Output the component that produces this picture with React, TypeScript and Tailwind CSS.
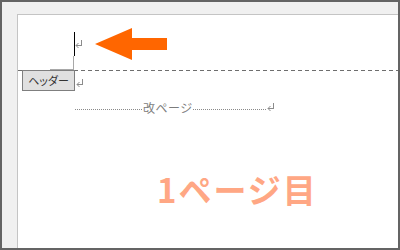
import React from "react";

function ReturnMark({ className = "" }: { className?: string }) {
  return (
    <svg width="8" height="8" viewBox="0 0 8 8" className={className} fill="none" stroke="#8c8c8c" strokeWidth="1" shapeRendering="crispEdges">
      <path d="M6.5 0 V5.5 H1" />
      <path d="M3.5 3 L1 5.5 L3.5 8" shapeRendering="auto" />
    </svg>
  );
}

function Arrow() {
  return (
    <svg width="72" height="32" viewBox="0 0 72 32" className="shrink-0">
      <polygon points="0,16 37,0 37,10 72,10 72,22 37,22 37,32" fill="#ff6600" />
    </svg>
  );
}

export default function App() {
  const jp = "font-['Noto_Sans_CJK_JP','Noto_Sans',sans-serif]";
  return (
    <div className="w-[400px] h-[250px] border-2 border-[#646464] bg-[#f0f0f0] flex flex-col pl-[15px] pt-[12px] overflow-hidden">
      <div className="relative flex-1 bg-white border-l border-t border-[#c4c4c4] flex flex-col">
        {/* header boundary line */}
        <div className="absolute left-[55px] top-[41px] w-px h-[14px] bg-[#a8a8a8]" />
        <div className="absolute left-[32px] top-[54px] w-[24px] h-px bg-[#a8a8a8]" />

        {/* cursor row */}
        <div className="flex items-start mt-[13px] pl-[56px] h-[32px]">
          <div className="w-px h-[24px] mt-[4px] bg-black" />
          <ReturnMark className="mt-[12px]" />
          <div className="ml-[12px]">
            <Arrow />
          </div>
        </div>

        {/* dashed header line */}
        <div className="mt-[10px] h-px w-full bg-[repeating-linear-gradient(90deg,#6e6e6e_0_4px,transparent_4px_7px)]" />

        {/* header tab row */}
        <div className="flex items-start pl-[4px] -mt-px">
          <div className={`w-[53px] h-[21px] border border-[#7f7f7f] bg-[#e0e0e0] flex items-center justify-center text-[11px] leading-none text-[#333] ${jp} [font-feature-settings:'palt']`}>
            ヘッダー
          </div>
          <ReturnMark className="ml-px mt-[9px]" />
        </div>

        {/* page break row */}
        <div className="flex items-center pl-[57px] mt-[10px] h-[14px]">
          <div className="w-[68px] h-px mt-[2px] bg-[repeating-linear-gradient(90deg,#8a8a8a_0_1px,transparent_1px_2px)]" />
          <div className={`w-[50px] text-[12px] leading-none text-[#7c7c7c] tracking-[0.5px] ${jp}`}>改ページ</div>
          <div className="w-[74px] h-px mt-[2px] bg-[repeating-linear-gradient(90deg,#8a8a8a_0_1px,transparent_1px_2px)]" />
          <ReturnMark className="-mt-[3px]" />
        </div>

        {/* big label */}
        <div className={`mt-[58px] pl-[139px] text-[33px] leading-none font-bold text-[#ffa784] tracking-[2px] ${jp}`}>
          1ページ目
        </div>
      </div>
    </div>
  );
}
